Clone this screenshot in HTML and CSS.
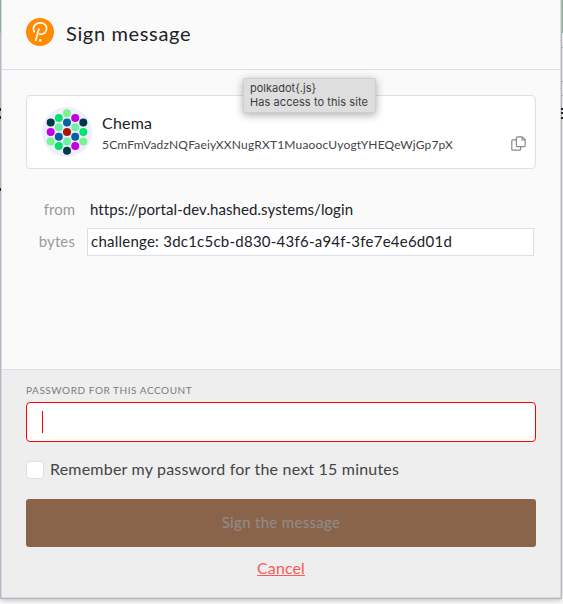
FILE: index.html
```html
<!DOCTYPE html>
<html lang="en">
<head>
<meta charset="utf-8">
<title>Sign message</title>
<link rel="stylesheet" href="styles.css">
</head>
<body>
<div class="backdrop">
  <i class="strip green-left"></i><i class="strip green-right"></i>
  <i class="strip mark m1"></i><i class="strip mark m2"></i><i class="strip mark m3"></i>
  <i class="strip rule r1"></i><i class="strip rule r2"></i><i class="strip rule r3"></i>
  <i class="strip edge e1"></i><i class="strip edge e2"></i><i class="strip edge e3"></i>
</div>
<main class="popup">
  <header class="header">
    <svg class="logo" width="28" height="28" viewBox="0 0 28 28">
      <circle cx="14" cy="14" r="14" fill="#ff8c00"/>
      <path d="M8.3 13.7C5.8 9.3 9.4 4.8 14.2 4.8c4 0 6.4 2.4 6.4 5.6 0 3.6-3 6.2-6.8 5.8M12.9 11L9.7 22.2" fill="none" stroke="#fff" stroke-width="1.7" stroke-linecap="round" stroke-linejoin="round"/>
      <circle cx="14.3" cy="22.4" r="1.3" fill="#fff"/>
    </svg>
    <h1 class="title">Sign message</h1>
  </header>
  <section class="account">
    <svg class="identicon" width="50" height="50" viewBox="0 0 50 50">
      <circle cx="25" cy="25" r="25" fill="#eeeefc"/>
      <g fill="#7af38e"><circle cx="25" cy="6.2" r="4"/><circle cx="8.7" cy="34.4" r="4"/><circle cx="41.3" cy="34.4" r="4"/></g>
      <g fill="#00e36b"><circle cx="16.8" cy="10.9" r="4"/><circle cx="41.3" cy="25" r="4"/><circle cx="16.8" cy="39.1" r="4"/></g>
      <g fill="#c400e3"><circle cx="33.2" cy="10.9" r="4"/><circle cx="8.7" cy="25" r="4"/><circle cx="33.2" cy="39.1" r="4"/></g>
      <g fill="#003848"><circle cx="8.7" cy="15.6" r="4"/><circle cx="41.3" cy="15.6" r="4"/><circle cx="25" cy="43.8" r="4"/></g>
      <g fill="#075fa5"><circle cx="25" cy="15.6" r="4"/><circle cx="16.8" cy="29.7" r="4"/><circle cx="33.2" cy="29.7" r="4"/></g>
      <g fill="#70efa5"><circle cx="16.8" cy="20.3" r="4"/><circle cx="33.2" cy="20.3" r="4"/><circle cx="25" cy="34.4" r="4"/></g>
      <circle cx="25" cy="25" r="4" fill="#a91500"/>
    </svg>
    <div class="identity">
      <div class="name">Chema</div>
      <div class="address">5CmFmVadzNQFaeiyXXNugRXT1MuaoocUyogtYHEQeWjGp7pX</div>
    </div>
    <svg class="copy" width="15" height="15" viewBox="0 0 15 15" fill="none" stroke="#8a8a8a" stroke-width="1.2" stroke-linejoin="round">
      <path d="M6.3.8h5l2.9 2.9v6.1a.9.9 0 0 1-.9.9H6.3a.9.9 0 0 1-.9-.9V1.7a.9.9 0 0 1 .9-.9zM11 .8V4h3.2M5.4 3.8H1.7a.9.9 0 0 0-.9.9v8.6a.9.9 0 0 0 .9.9h7a.9.9 0 0 0 .9-.9v-2.6"/>
    </svg>
  </section>
  <dl class="details">
    <dt>from</dt><dd class="from">https://portal-dev.hashed.systems/login</dd>
    <dt class="bytes-label">bytes</dt><dd class="bytes">challenge: 3dc1c5cb-d830-43f6-a94f-3fe7e4e6d01d</dd>
  </dl>
  <form class="actions">
    <label class="caption">PASSWORD FOR THIS ACCOUNT</label>
    <div class="password"><i class="caret"></i></div>
    <label class="remember"><i class="box"></i><span>Remember my password for the next 15 minutes</span></label>
    <button class="sign" type="button">Sign the message</button>
    <a class="cancel">Cancel</a>
  </form>
</main>
<div class="tooltip"><div>polkadot{.js}</div><div class="access">Has access to this site</div></div>
</body>
</html>
```
FILE: styles.css
```css
* { box-sizing: border-box; }
body { margin: 0; width: 563px; height: 604px; overflow: hidden; position: relative; background: #f9f9fa; color: #212227; font-family: Lato, "Liberation Sans", sans-serif; }
.backdrop { position: absolute; inset: 0; }
.strip { position: absolute; }
.green-left { left: 0; top: 0; width: 1px; height: 33px; background: #82b695; z-index: 2; }
.green-right { right: 0; top: 0; width: 1px; height: 33px; background: #91c4a1; }
.mark { left: 0; width: 1px; height: 3px; background: #222; z-index: 2; }
.m1 { top: 108px; } .m2 { top: 116px; } .m3 { top: 188px; }
.rule { right: 0; width: 1px; height: 1px; background: #bbb; }
.r1 { top: 47px; } .r2 { top: 81px; } .r3 { top: 95px; }
.edge { left: 561px; width: 2px; height: 2px; background: #222; z-index: 2; }
.e1 { top: 108px; } .e2 { top: 112px; } .e3 { top: 117px; }
.popup { position: relative; width: 560px; height: 598px; margin-left: 1px; border: 1px solid #d8d8e3; border-top: 0; background: #fafafa; display: flex; flex-direction: column; box-shadow: 0 0 0 1px #b7b7c2, 0 2px 5px #0004; }
.header { height: 70px; border-bottom: 1px solid #dcdfeb; display: flex; padding: 18px 24px 0; gap: 12px; }
.title { margin: 0; padding-top: 3px; font-size: 20px; line-height: 25px; font-weight: 400; letter-spacing: .65px; }
.account { margin: 25px 24px 0; height: 74px; border: 1px solid #dadfed; border-radius: 4px; background: #fff; display: flex; padding: 11px 9px 0 15px; }
.identity { margin-left: 10px; flex: 1; }
.name { font-size: 16px; line-height: 22px; margin-top: 5px; letter-spacing: .2px; }
.address { font-size: 12px; line-height: 18px; color: #444; margin-top: 2px; letter-spacing: .19px; }
.copy { margin-top: 29px; }
.details { margin: 26px 26px 0 24px; display: grid; grid-template-columns: 49px 1fr; column-gap: 12px; grid-template-rows: 28px 28px; row-gap: 5px; font-size: 15px; line-height: 28px; }
.details dt { text-align: right; color: #9b9b9b; }
.details dd { margin: 0; }
.details .bytes-label { line-height: 27px; letter-spacing: .1px; }
.from { padding-left: 3px; letter-spacing: .07px; }
.bytes { border: 1px solid #dadfed; background: #fff; padding-left: 3px; line-height: 25px; letter-spacing: .24px; }
.actions { margin-top: auto; height: 228px; border-top: 1px solid #dcdfeb; background: #eee; padding: 13px 24px 0; display: flex; flex-direction: column; }
.caption { font-size: 10px; line-height: 14px; color: #7c7c7c; letter-spacing: .55px; }
.password { margin-top: 5px; height: 40px; border: 1px solid #f00; border-radius: 4px; background: #fff; padding: 8px 15px; }
.caret { display: block; width: 1px; height: 22px; background: #f00; }
.remember { display: flex; align-items: center; gap: 6px; height: 20px; margin-top: 18px; font-size: 16px; line-height: 18px; color: #444; letter-spacing: .2px; }
.remember span { margin-bottom: 2px; }
.box { width: 18px; height: 18px; border: 1px solid #dadfed; border-radius: 4px; background: #fff; }
.sign { margin-top: 19px; height: 48px; border: 0; border-radius: 3px; background: #8a634b; color: #8f8b89; font: 500 15px Lato, sans-serif; letter-spacing: .3px; padding-bottom: 3px; }
.cancel { margin-top: 10px; text-align: center; font-size: 16px; line-height: 22px; color: #ff5858; text-decoration: underline; letter-spacing: .1px; }
.tooltip { position: absolute; left: 243px; top: 78px; width: 133px; height: 35px; background: #dedede; border: 1px solid #cfcfcf; border-radius: 2px; box-shadow: 0 2px 8px #0005; padding: 2px 6px; font: 11px/14px Inter, sans-serif; color: #3c3c3c; }
.access { letter-spacing: .07px; }
```
